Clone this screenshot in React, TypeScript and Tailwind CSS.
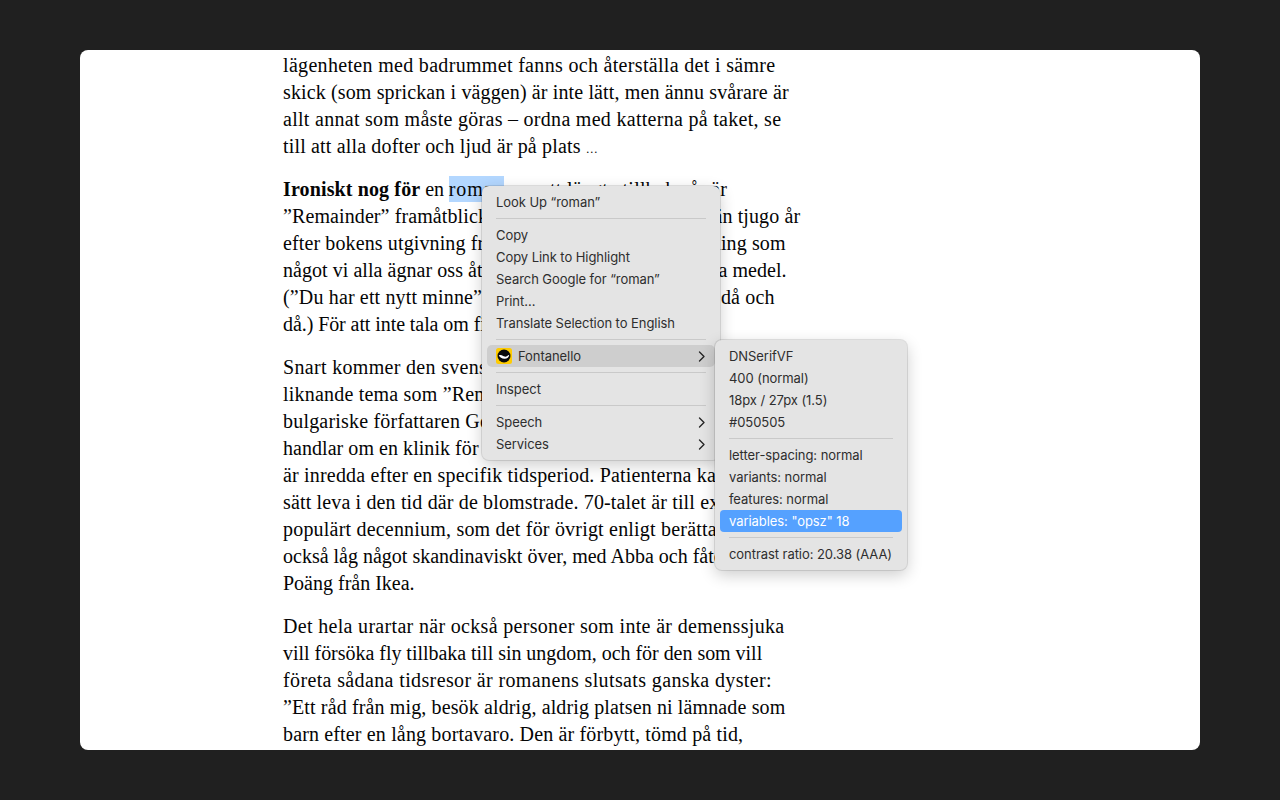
import type { ReactNode } from "react";

type Line = [ReactNode, string];

const paragraphs: Line[][] = [
  [
    ["lägenheten med badrummet fanns och återställa det i sämre", "tracking-[0.32px]"],
    ["skick (som sprickan i väggen) är inte lätt, men ännu svårare är", "tracking-[0.13px]"],
    ["allt annat som måste göras – ordna med katterna på taket, se", "tracking-[0.29px]"],
    [
      <>
        till att alla dofter och ljud är på plats <span className="text-[12px] leading-none tracking-normal">…</span>
      </>,
      "tracking-[0.16px]",
    ],
  ],
  [
    [
      <>
        <b className="tracking-[0.13px]">Ironiskt nog för</b>
        <span className="tracking-[-0.1px]"> en </span>
        <span className="py-[2px] tracking-[0.9px] bg-[#b3d7ff]">roman</span>
        <span className="tracking-[0.25px]"> om att längta tillbaka år är</span>
      </>,
      "",
    ],
    ["”Remainder” framåtblickande, och det är svårare för än tjugo år", "tracking-[0.1px]"],
    ["efter bokens utgivning framstår nostalgi som en handling som", "tracking-[0.12px]"],
    ["något vi alla ägnar oss åt, och med alla tillbuds möjliga medel.", "tracking-[0.05px]"],
    ["(”Du har ett nytt minne” påminner Facebook mig om då och", "tracking-[0.15px]"],
    ["då.) För att inte tala om filmer och serier.", "tracking-[-0.08px]"],
  ],
  [
    ["Snart kommer den svenska översättningen av en roman på", "tracking-[0.32px]"],
    ["liknande tema som ”Remainder” av den", "tracking-[0.2px]"],
    ["bulgariske författaren Georgi Gospodinov, den", "tracking-[0.2px]"],
    ["handlar om en klinik för demenssjuka där rummen", "tracking-[0.05px]"],
    ["är inredda efter en specifik tidsperiod. Patienterna kan på så", "tracking-[0.18px]"],
    ["sätt leva i den tid där de blomstrade. 70-talet är till exempel", "tracking-[0.15px]"],
    ["populärt decennium, som det för övrigt enligt berättaren", "tracking-[0.2px]"],
    ["också låg något skandinaviskt över, med Abba och fåtöljen", "tracking-[0px]"],
    ["Poäng från Ikea.", "tracking-[0px]"],
  ],
  [
    ["Det hela urartar när också personer som inte är demenssjuka", "tracking-[0.32px]"],
    ["vill försöka fly tillbaka till sin ungdom, och för den som vill", "tracking-[-0.03px]"],
    ["företa sådana tidsresor är romanens slutsats ganska dyster:", "tracking-[0.37px]"],
    ["”Ett råd från mig, besök aldrig, aldrig platsen ni lämnade som", "tracking-[0.13px]"],
    ["barn efter en lång bortavaro. Den är förbytt, tömd på tid,", "tracking-[0.15px]"],
  ],
];

function Chevron() {
  return (
    <svg width="7" height="11" viewBox="0 0 7 11" fill="none" className="shrink-0 -mt-[2px] mr-px">
      <path d="M1.5 1 L6 5.5 L1.5 10" stroke="#262626" strokeWidth="1.4" strokeLinecap="round" strokeLinejoin="round" />
    </svg>
  );
}

function Sep() {
  return (
    <div className="h-[11px] flex items-center px-[14px]">
      <div className="h-px w-full bg-[#c9c9c9]" />
    </div>
  );
}

function Row({ label, arrow }: { label: string; arrow?: boolean }) {
  return (
    <div className="h-[22px] mx-[5px] pl-[9px] pr-[9px] pt-[2px] flex items-center justify-between whitespace-nowrap">
      <span>{label}</span>
      {arrow && <Chevron />}
    </div>
  );
}

function Logo() {
  return (
    <svg width="16" height="16" viewBox="0 0 16 16" className="shrink-0 -mt-[2px]">
      <rect width="16" height="16" rx="2.5" fill="#ffcc00" />
      <circle cx="8" cy="8" r="6.5" fill="#0a0a0a" />
      <path d="M2.8 7.4 C5.6 6.2 7 8.2 8.6 8.6 C10.4 9 11.6 7.6 13.2 6.8 C13 9.4 10.8 11 8.4 10.8 C5.8 10.6 3.8 9.4 2.8 7.4 Z" fill="#ffffff" />
    </svg>
  );
}

const menuClass =
  "absolute py-[5px] rounded-[7px] bg-[#e4e4e4] shadow-[0_0_0_1px_rgba(0,0,0,0.1),0_5px_16px_rgba(0,0,0,0.2)] text-[13px] tracking-[-0.06px] text-[#2e2e2e] font-['Inter','Liberation_Sans',sans-serif]";

function ContextMenu() {
  return (
    <div className={`${menuClass} left-[402px] top-[136px] w-[238px]`}>
      <Row label="Look Up “roman”" />
      <Sep />
      <Row label="Copy" />
      <Row label="Copy Link to Highlight" />
      <Row label="Search Google for “roman”" />
      <Row label="Print…" />
      <Row label="Translate Selection to English" />
      <Sep />
      <div className="h-[22px] mx-[5px] px-[9px] pt-[2px] flex items-center justify-between rounded-[5px] bg-[#cecece]">
        <span className="flex items-center gap-[6px]">
          <Logo />
          Fontanello
        </span>
        <Chevron />
      </div>
      <Sep />
      <Row label="Inspect" />
      <Sep />
      <Row label="Speech" arrow />
      <Row label="Services" arrow />
    </div>
  );
}

function SubMenu() {
  return (
    <div className={`${menuClass} left-[635px] top-[290px] w-[192px]`}>
      <Row label="DNSerifVF" />
      <Row label="400 (normal)" />
      <Row label="18px / 27px (1.5)" />
      <Row label="#050505" />
      <Sep />
      <Row label="letter-spacing: normal" />
      <Row label="variants: normal" />
      <Row label="features: normal" />
      <div className="h-[22px] mx-[5px] px-[9px] pt-[2px] flex items-center rounded-[4px] bg-[#55a1ff] text-white whitespace-nowrap">
        variables: "opsz" 18
      </div>
      <Sep />
      <Row label="contrast ratio: 20.38 (AAA)" />
    </div>
  );
}

export default function App() {
  return (
    <div className="min-h-screen bg-[#202020] py-[50px] px-20">
      <div className="relative h-[700px] bg-white rounded-lg overflow-hidden">
        <article className="pl-[203px] pt-[2px] text-[20px] leading-[27px] text-[#050505] whitespace-nowrap font-['Liberation_Serif',serif]">
          {paragraphs.map((lines, i) => (
            <p key={i} className="mb-4">
              {lines.map(([line, tracking], j) => (
                <span key={j} className={`block ${tracking}`}>
                  {line}
                </span>
              ))}
            </p>
          ))}
        </article>
        <ContextMenu />
        <SubMenu />
      </div>
    </div>
  );
}
